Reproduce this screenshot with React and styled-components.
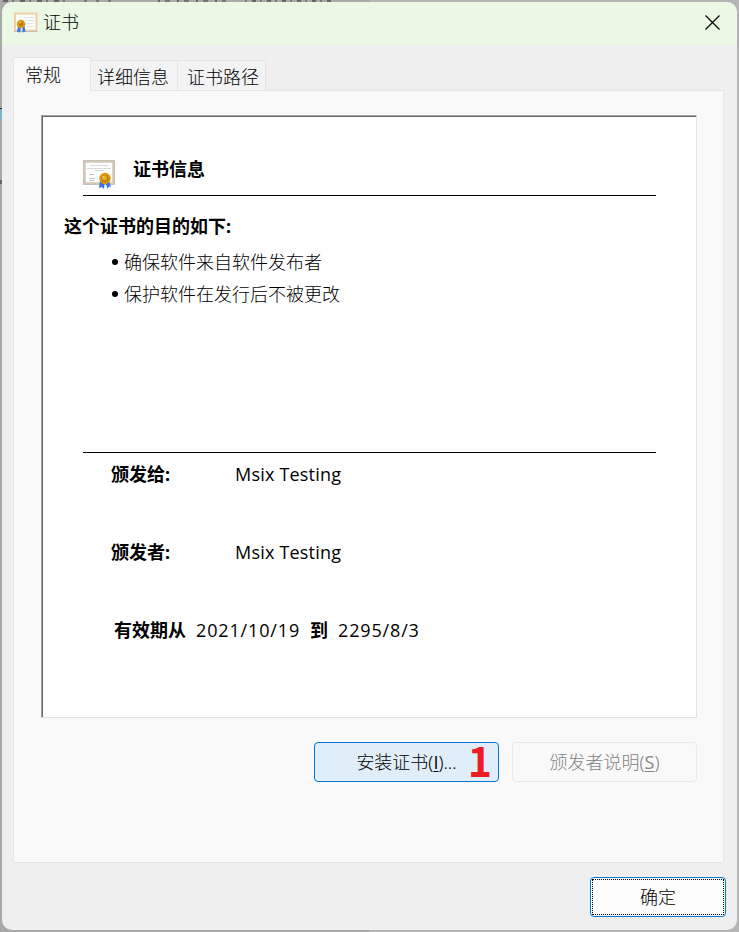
import React from "react";
import styled, { createGlobalStyle, css } from "styled-components";

const Global = createGlobalStyle`
  * { box-sizing: border-box; }
  body { margin: 0; overflow: hidden; }
`;

const Desktop = styled.div`
  width: 739px;
  height: 932px;
  padding: 2px 2px 2px 2px;
  background:
    repeating-linear-gradient(90deg, transparent 0 4px, #666 4px 6px, transparent 6px 11px, #777 11px 16px, transparent 16px 19px) 154px 0 / 72px 2px no-repeat,
    repeating-linear-gradient(90deg, #777 0 2px, transparent 2px 7px, #666 7px 11px, transparent 11px 15px) 245px 0 / 86px 2px no-repeat,
    repeating-linear-gradient(90deg, #666 0 5px, transparent 5px 9px, #777 9px 11px, transparent 11px 17px) 3px 0 / 62px 2px no-repeat,
    repeating-linear-gradient(90deg, #777 0 3px, transparent 3px 12px) 84px 0 / 34px 2px no-repeat,
    linear-gradient(#222, #222) 0 108px / 2px 1px no-repeat,
    linear-gradient(#72b7c5, #72b7c5) 0 109px / 2px 10px no-repeat,
    linear-gradient(#667, #667) 0 180px / 2px 4px no-repeat,
    linear-gradient(90deg, #a9a9a9 0 50%, #b4b4b4 50% 100%);
  font-family: "Noto Sans", "Noto Sans CJK SC", sans-serif;
  font-size: 18px;
  line-height: 24px;
  color: #000;
`;

const Dialog = styled.section`
  display: flex;
  flex-direction: column;
  width: 735px;
  height: 928px;
  overflow: hidden;
  border-radius: 10px;
  background: #efefef;
`;

const TitleBar = styled.header`
  display: flex;
  align-items: center;
  height: 43px;
  flex: none;
  padding: 0 16px 2px 11px;
  background: #ebf8e4;
`;

const Title = styled.h1`
  flex: 1;
  margin: -2px 0 0 5px;
  font: inherit;
  font-weight: 300;
`;

const CloseButton = styled.button`
  display: flex;
  padding: 0;
  border: 0;
  background: none;
`;

const Tabs = styled.nav`
  display: flex;
  align-items: flex-end;
  flex: none;
  height: 45px;
  margin-left: 11px;
`;

const Tab = styled.button`
  height: 30px;
  width: ${(p) => p.$width}px;
  padding: 0 0 0 ${(p) => p.$inset}px;
  border: 1px solid #e5e5e5;
  border-width: 1px 1px 0 0;
  background: #f3f3f3;
  font: inherit;
  font-weight: 300;
  line-height: 33px;
  text-align: left;
  white-space: nowrap;
  color: #000;
  ${(p) =>
    p.$active &&
    css`
      height: 34px;
      margin-bottom: -1px;
      border-left-width: 1px;
      background: #f9f9f9;
      line-height: 34px;
      position: relative;
    `}
`;

const Page = styled.main`
  flex: none;
  width: 711px;
  height: 773px;
  margin-left: 11px;
  padding: 24px 26px 0 27px;
  border: 1px solid #e5e5e5;
  background: #f9f9f9;
`;

const Frame = styled.div`
  width: 656px;
  height: 603px;
  border: 1px solid;
  border-color: #a0a0a0 #e3e3e3 #e3e3e3 #a0a0a0;
`;

const Certificate = styled.article`
  display: flex;
  flex-direction: column;
  height: 601px;
  padding: 40px 40px 0 21px;
  border: solid #696969;
  border-width: 1px 0 0 1px;
  background: #fff;
`;

const Heading = styled.div`
  display: flex;
  height: 39px;
  margin-left: 19px;
  border-bottom: 1px solid #000;
`;

const HeadingText = styled.h2`
  margin: 0 0 0 17px;
  font-size: 18px;
  font-weight: 700;
  line-height: 24px;
`;

const IconSlot = styled.span`
  display: flex;
  padding-top: 3px;
`;

const Purpose = styled.h3`
  margin: 18px 0 0;
  font-size: 18px;
  font-weight: 700;
  line-height: 24px;
`;

const PurposeList = styled.ul`
  height: 206px;
  margin: 9px 0 0 19px;
  padding: 0 0 0 28px;
  list-style: none;
  border-bottom: 1px solid #000;
`;

const PurposeItem = styled.li`
  display: flex;
  align-items: center;
  height: 32px;
  padding-bottom: 3px;
  font-weight: 300;

  &::before {
    content: "";
    width: 6px;
    height: 6px;
    margin: 1px 6px 0 1px;
    border-radius: 50%;
    background: #000;
  }
`;

const Field = styled.div`
  display: flex;
  height: 24px;
  margin: ${(p) => p.$top}px 0 0 ${(p) => p.$left || 47}px;
  white-space: pre;
`;

const Label = styled.strong`
  width: ${(p) => (p.$width ? `${p.$width}px` : "auto")};
  font-weight: 700;
`;

const Value = styled.span`
  width: ${(p) => (p.$width ? `${p.$width}px` : "auto")};
  font-family: "Open Sans", "Noto Sans", sans-serif;
  font-size: 18px;
  font-weight: 400;
  letter-spacing: ${(p) => p.$spacing || 0}px;
`;

const Actions = styled.div`
  display: flex;
  gap: 13px;
  justify-content: flex-end;
  margin-top: 24px;
`;

const Button = styled.button`
  position: relative;
  width: 185px;
  height: 40px;
  padding: 0 0 1px;
  border: 1px solid ${(p) => (p.$primary ? "#0078d4" : "#e9e9e9")};
  border-radius: 4px;
  background: ${(p) => (p.$primary ? "#e0eef9" : "#f9f9f9")};
  color: ${(p) => (p.$primary ? "#000" : "#838383")};
  font: inherit;
  font-weight: 300;
`;

const Key = styled.u`
  font-family: "Open Sans", sans-serif;
  font-weight: 400;
  text-decoration-thickness: 1px;
  text-underline-offset: 2px;
`;

const StepMark = styled.span`
  position: absolute;
  right: 6px;
  top: -4px;
  color: #ed1c24;
  font: 700 41px/40px "Noto Sans CJK SC", sans-serif;
`;

const Footer = styled.footer`
  display: flex;
  justify-content: flex-end;
  padding: 14px 11px 0 0;
`;

const OkButton = styled.button`
  width: 136px;
  height: 40px;
  padding: 1px;
  border: 1px solid #0078d4;
  border-radius: 4px;
  background: #fdfdfd;
  color: #000;
  font: inherit;
  font-weight: 300;
`;

const Focus = styled.span`
  display: block;
  height: 36px;
  border: 1px dotted #000;
  line-height: 35px;
`;

function SmallCertificate() {
  return (
    <svg width="25" height="22" viewBox="0 0 25 22">
      <path d="M2 1.5h21.5v17H2z" fill="#fffdfa" stroke="#edcfaa" strokeWidth="2" />
      <path d="M1 19.5h23.5" stroke="#c4c0b8" />
      <path d="M11 5.5h10M12 8.500h9M12 11.500h9M14 14.500h7" stroke="#e0e3ea" />
      <path d="M5 14h3l-1 7-1.500-1.500-1.500 1zM9.500 14h2l1 6-1.500-.5-1.500 1.500z" fill="#3275e8" />
      <circle cx="8" cy="12" r="4.300" fill="#d59b16" />
      <circle cx="8" cy="12" r="2" fill="#b77705" />
      <circle cx="7" cy="10.500" r="1" fill="#efc65b" />
    </svg>
  );
}

function LargeCertificate() {
  return (
    <svg width="33" height="30" viewBox="0 0 33 30">
      <path d="M1.500 1.500h29v22h-29z" fill="#fffefa" stroke="#d2c8ba" strokeWidth="2.500" />
      <path d="M.5.5h31v24H.5z" fill="none" stroke="#bfb8ad" strokeWidth=".7" />
      <path d="M7 5.500h18M4 8.500h24M12 10.500h9" stroke="#d3d8e4" />
      <path d="M6 14.500h5M6 18.500h6M6 20.500h5" stroke="#bdc5d9" />
      <path d="M17 21h5l-1 8-2-2-3 1zM22 21h4l2 6-2-.5-1.500 2.500z" fill="#3475df" />
      <circle cx="22" cy="18.500" r="5.700" fill="#d9970b" />
      <circle cx="22" cy="18.500" r="3.500" fill="#ba7909" />
      <circle cx="21.500" cy="18" r="2.500" fill="#e3aa2a" />
      <circle cx="20.500" cy="17" r="1" fill="#f4ce69" />
    </svg>
  );
}

export default function App() {
  return (
    <Desktop>
      <Global />
      <Dialog>
        <TitleBar>
          <SmallCertificate />
          <Title>证书</Title>
          <CloseButton aria-label="关闭">
            <svg width="17" height="17" viewBox="0 0 17 17">
              <path d="M1.500 1.500l14 14M15.500 1.500l-14 14" stroke="#111" strokeWidth="1.400" />
            </svg>
          </CloseButton>
        </TitleBar>
        <Tabs>
          <Tab $active $width={78} $inset={11}>常规</Tab>
          <Tab $width={87} $inset={6}>详细信息</Tab>
          <Tab $width={88} $inset={9}>证书路径</Tab>
        </Tabs>
        <Page>
          <Frame>
            <Certificate>
              <Heading>
                <IconSlot><LargeCertificate /></IconSlot>
                <HeadingText>证书信息</HeadingText>
              </Heading>
              <Purpose>这个证书的目的如下:</Purpose>
              <PurposeList>
                <PurposeItem>确保软件来自软件发布者</PurposeItem>
                <PurposeItem>保护软件在发行后不被更改</PurposeItem>
              </PurposeList>
              <Field $top={9}>
                <Label $width={124}>颁发给:</Label>
                <Value $spacing={0.2}>Msix Testing</Value>
              </Field>
              <Field $top={54}>
                <Label $width={124}>颁发者:</Label>
                <Value $spacing={0.2}>Msix Testing</Value>
              </Field>
              <Field $top={54} $left={50}>
                <Label $width={82}>有效期从</Label>
                <Value $width={114} $spacing={0.85}>2021/10/19</Value>
                <Label $width={28}>到</Label>
                <Value $spacing={0.85}>2295/8/3</Value>
              </Field>
            </Certificate>
          </Frame>
          <Actions>
            <Button $primary>
              安装证书(<Key>I</Key>)...
              <StepMark>1</StepMark>
            </Button>
            <Button disabled>颁发者说明(<Key>S</Key>)</Button>
          </Actions>
        </Page>
        <Footer>
          <OkButton><Focus>确定</Focus></OkButton>
        </Footer>
      </Dialog>
    </Desktop>
  );
}
